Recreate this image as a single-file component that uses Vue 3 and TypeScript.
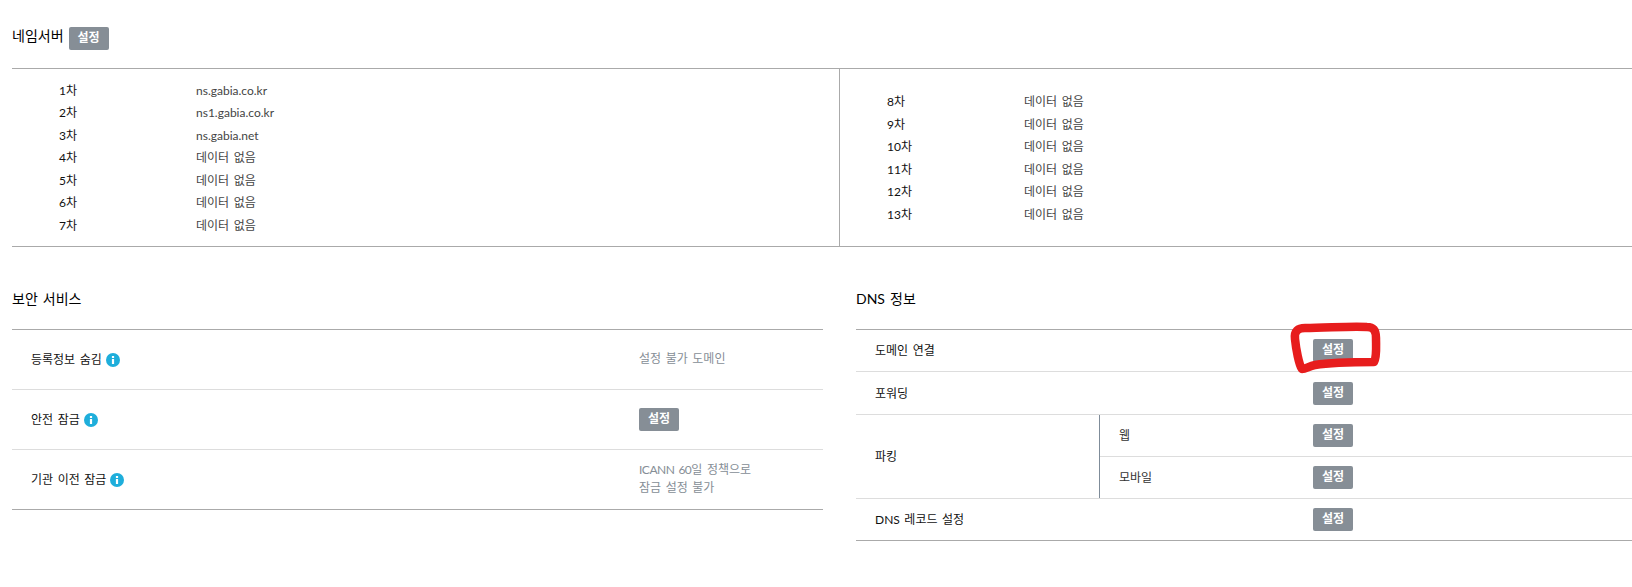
<template>
  <div class="page">
    <div class="title-row">
      <h3 class="title">네임서버</h3>
      <button class="btn">설정</button>
    </div>
    <div class="ns-table">
      <div class="ns-col">
        <div v-for="item in nsLeft" :key="item.label" class="ns-row">
          <span class="ns-label">{{ item.label }}</span>
          <span class="ns-value">{{ item.value }}</span>
        </div>
      </div>
      <div class="ns-col ns-col-right">
        <div v-for="item in nsRight" :key="item.label" class="ns-row">
          <span class="ns-label">{{ item.label }}</span>
          <span class="ns-value">{{ item.value }}</span>
        </div>
      </div>
    </div>

    <div class="bottom">
      <section class="security">
        <h3 class="title section-title">보안 서비스</h3>
        <div class="sec-table">
          <div class="sec-row">
            <div class="sec-label">
              <span class="lift">등록정보 숨김</span>
              <svg class="info" viewBox="0 0 14 14"><circle cx="7" cy="7" r="7" fill="#1eaedb" /><rect x="5.9" y="6" width="2.2" height="5" fill="#fff" /><rect x="5.9" y="3" width="2.2" height="2" fill="#fff" /></svg>
            </div>
            <div class="sec-value muted lift">설정 불가 도메인</div>
          </div>
          <div class="sec-row">
            <div class="sec-label">
              <span class="lift">안전 잠금</span>
              <svg class="info" viewBox="0 0 14 14"><circle cx="7" cy="7" r="7" fill="#1eaedb" /><rect x="5.9" y="6" width="2.2" height="5" fill="#fff" /><rect x="5.9" y="3" width="2.2" height="2" fill="#fff" /></svg>
            </div>
            <div class="sec-value"><button class="btn">설정</button></div>
          </div>
          <div class="sec-row">
            <div class="sec-label">
              <span class="lift">기관 이전 잠금</span>
              <svg class="info" viewBox="0 0 14 14"><circle cx="7" cy="7" r="7" fill="#1eaedb" /><rect x="5.9" y="6" width="2.2" height="5" fill="#fff" /><rect x="5.9" y="3" width="2.2" height="2" fill="#fff" /></svg>
            </div>
            <div class="sec-value muted lift"><span class="tight">ICANN 60</span>일 정책으로<br />잠금 설정 불가</div>
          </div>
        </div>
      </section>

      <section class="dns">
        <h3 class="title section-title">DNS 정보</h3>
        <div class="dns-table">
          <div class="dns-row">
            <div class="dns-label lift">도메인 연결</div>
            <button class="btn">설정</button>
          </div>
          <div class="dns-row dns-row-tall">
            <div class="dns-label lift">포워딩</div>
            <button class="btn">설정</button>
          </div>
          <div class="dns-group">
            <div class="dns-group-label lift">파킹</div>
            <div class="dns-subs">
              <div class="dns-sub">
                <div class="dns-sub-label lift">웹</div>
                <button class="btn">설정</button>
              </div>
              <div class="dns-sub">
                <div class="dns-sub-label lift">모바일</div>
                <button class="btn">설정</button>
              </div>
            </div>
          </div>
          <div class="dns-row">
            <div class="dns-label lift">DNS 레코드 설정</div>
            <button class="btn">설정</button>
          </div>
        </div>
      </section>
    </div>

    <!-- hand drawn marker around the first DNS button -->
    <svg class="marker" viewBox="0 0 100 56">
      <path d="M8 18 C7 10 11 7 18 7 C40 7 62 5 80 6 C87 6 89 10 89 17 C89 26 90 36 87 41 C66 41 40 42 28 44 C22 45 19 48 15 48 C12 44 9 28 8 18 Z" />
    </svg>
  </div>
</template>

<script setup lang="ts">
interface NsItem {
  label: string
  value: string
}

const noData = '데이터 없음'

const nsLeft: NsItem[] = [
  { label: '1차', value: 'ns.gabia.co.kr' },
  { label: '2차', value: 'ns1.gabia.co.kr' },
  { label: '3차', value: 'ns.gabia.net' },
  { label: '4차', value: noData },
  { label: '5차', value: noData },
  { label: '6차', value: noData },
  { label: '7차', value: noData }
]

const nsRight: NsItem[] = [8, 9, 10, 11, 12, 13].map((n) => ({
  label: `${n}차`,
  value: noData
}))
</script>

<style>
body {
  background: #fff;
}
</style>

<style scoped>
.page {
  position: relative;
  width: 1632px;
  height: 587px;
  padding: 27px 0 0 12px;
  box-sizing: border-box;
  overflow: hidden;
  font-family: Lato, "Noto Sans CJK KR", "Noto Sans", sans-serif;
  font-size: 12px;
  word-spacing: 1.5px;
  color: #111;
}

.title-row {
  display: flex;
  align-items: flex-start;
  gap: 5px;
  height: 23px;
  margin-bottom: 18px;
}

.title {
  margin: 0;
  font-size: 14px;
  font-weight: 400;
  line-height: 18px;
  color: #000;
}

.btn {
  width: 40px;
  height: 23px;
  padding: 0 0 2px;
  border: 0;
  border-radius: 2px;
  background: #868e96;
  color: #fff;
  font-family: inherit;
  font-size: 12px;
  font-weight: 700;
  line-height: 19px;
  flex: none;
}

.ns-table {
  display: flex;
  height: 177px;
  border-top: 1px solid #aaa;
  border-bottom: 1px solid #aaa;
}

.ns-col {
  display: flex;
  flex-direction: column;
  justify-content: center;
  width: 827px;
  padding-left: 47px;
  box-sizing: border-box;
}

.ns-col-right {
  flex: 1;
  padding-left: 47px;
  border-left: 1px solid #aaa;
}

.ns-row {
  display: flex;
  height: 22.5px;
  line-height: 24px;
}

.ns-label {
  width: 137px;
}

.ns-value {
  color: #444;
}

.bottom {
  display: flex;
  margin-top: 43px;
}

.section-title {
  height: 20px;
  margin-bottom: 19px;
}

.security {
  width: 811px;
}

.sec-table {
  border-top: 1px solid #aaa;
  border-bottom: 1px solid #aaa;
}

.sec-row {
  display: flex;
  align-items: center;
  height: 59px;
  padding-left: 19px;
}

.sec-row + .sec-row {
  border-top: 1px solid #ddd;
}

.sec-label {
  display: flex;
  align-items: center;
  gap: 4px;
  width: 608px;
}

/* korean glyphs sit a bit low in this font */
.lift {
  padding-bottom: 2px;
}

.tight {
  letter-spacing: -0.5px;
}

.info {
  width: 14px;
  height: 14px;
}

.muted {
  color: #868e96;
  line-height: 18px;
}

.dns {
  flex: 1;
  margin-left: 33px;
}

.dns-table {
  border-top: 1px solid #aaa;
  border-bottom: 1px solid #aaa;
}

.dns-row {
  display: flex;
  align-items: center;
  height: 41px;
}

.dns-row-tall {
  height: 42px;
}

.dns-row + .dns-row,
.dns-group,
.dns-group + .dns-row {
  border-top: 1px solid #ddd;
}

.dns-label {
  width: 438px;
  padding-left: 19px;
}

.dns-group {
  display: flex;
}

.dns-group-label {
  display: flex;
  align-items: center;
  width: 224px;
  padding-left: 19px;
}

.dns-subs {
  flex: 1;
  border-left: 1px solid #7f8c99;
}

.dns-sub {
  display: flex;
  align-items: center;
  height: 41px;
}

.dns-sub + .dns-sub {
  border-top: 1px solid #ddd;
}

.dns-sub-label {
  width: 194px;
  padding-left: 19px;
  color: #333;
}

.marker {
  position: absolute;
  left: 1287px;
  top: 321px;
  width: 100px;
  height: 56px;
  pointer-events: none;
}

.marker path {
  fill: none;
  stroke: #e71d1d;
  stroke-width: 8.5;
  stroke-linejoin: round;
}
</style>
